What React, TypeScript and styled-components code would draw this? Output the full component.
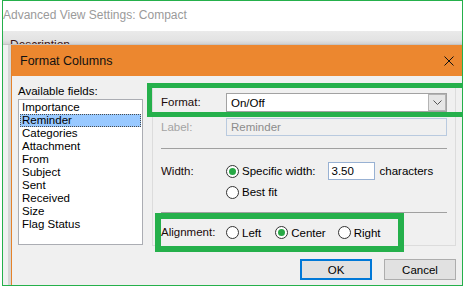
import styled, { createGlobalStyle } from "styled-components";

const GREEN = "#25b04b";

const GlobalStyle = createGlobalStyle`
  html, body {
    margin: 0;
    padding: 0;
    background: #fff;
  }
  body {
    font-family: "Liberation Sans", Arial, sans-serif;
    font-size: 11.5px;
    color: #000;
  }
`;

const Frame = styled.div`
  box-sizing: border-box;
  margin-left: 2px;
  width: 461px;
  height: 286px;
  border: 1px solid ${GREEN};
  overflow: hidden;
  display: flex;
  flex-direction: column;
`;

const WindowTitle = styled.div`
  flex-shrink: 0;
  height: 30px;
  line-height: 28px;
  font-size: 12px;
  color: #9a9a9a;
  white-space: nowrap;
`;

const Band = styled.div`
  flex-shrink: 0;
  box-sizing: border-box;
  height: 14px;
  overflow: hidden;
  padding: 7px 0 0 7px;
  line-height: 14px;
  font-size: 12px;
  color: #3a1414;
  background: linear-gradient(#eaeaea, #e3e3e3 70%, #d2d2d2);
  border-bottom: 1px solid #c4c4c4;
`;

const Lower = styled.div`
  flex: 1;
  display: flex;
  min-height: 0;
`;

const LeftStrip = styled.div`
  flex-shrink: 0;
  box-sizing: border-box;
  width: 8px;
  background: #f0f0f0;
  border-right: 3px solid #d6d6d6;
`;

const Dialog = styled.div`
  flex-shrink: 0;
  width: 465px;
  display: flex;
  flex-direction: column;
  background: #f0f0f0;
  border-left: 1px solid #e5822a;
`;

const Header = styled.div`
  height: 31px;
  display: flex;
  align-items: center;
  justify-content: space-between;
  padding: 0 23px 0 8px;
  background: #ec872f;
  font-size: 12.5px;
  color: #111;
`;

const Body = styled.div`
  padding: 8px 20px 0 6px;
`;

const Columns = styled.div`
  display: grid;
  grid-template-columns: 125px 304px;
  column-gap: 9px;
  align-items: start;
`;

const FieldsLabel = styled.div`
  height: 14px;
  line-height: 14px;
  margin-bottom: 1px;
`;

const ListBox = styled.div`
  box-sizing: border-box;
  height: 146px;
  padding: 1px;
  background: #fff;
  border: 1px solid #abadb3;
`;

const ListItem = styled.div<{ $selected?: boolean }>`
  height: 13px;
  line-height: 13px;
  padding-left: 2px;
  background: ${(p) => (p.$selected ? "#99c9ff" : "transparent")};
  outline: ${(p) => (p.$selected ? "1px dotted #4a4a4a" : "none")};
  outline-offset: -1px;
`;

const Panel = styled.div`
  margin-top: 2px;
  display: flex;
  flex-direction: column;
  border: 1px solid #dcdcdc;
`;

const FormatBox = styled.div`
  box-sizing: border-box;
  height: 34px;
  margin: -4px -13px 0 -6px;
  padding: 5px 0 0 9px;
  display: flex;
  align-items: flex-start;
  border: 5px solid ${GREEN};
`;

const Row = styled.div<{ $top: number; $indent?: number }>`
  display: flex;
  align-items: center;
  height: 18px;
  margin-top: ${(p) => p.$top}px;
  padding-left: ${(p) => p.$indent ?? 8}px;
`;

const FieldName = styled.span<{ $disabled?: boolean; $width?: number }>`
  width: ${(p) => p.$width ?? 65}px;
  flex-shrink: 0;
  line-height: 19px;
  color: ${(p) => (p.$disabled ? "#a3a3a3" : "#1a0a0a")};
`;

const Select = styled.div`
  box-sizing: border-box;
  width: 221px;
  height: 19px;
  display: flex;
  align-items: center;
  padding-left: 4px;
  background: #fff;
  border: 1px solid #a2a2a2;
`;

const SelectButton = styled.span`
  box-sizing: border-box;
  margin-left: auto;
  width: 18px;
  height: 17px;
  display: flex;
  align-items: center;
  justify-content: center;
  background: #e6e6e6;
  border: 1px solid #b4b4b4;
`;

const TextBox = styled.div<{ $width: number; $disabled?: boolean }>`
  box-sizing: border-box;
  width: ${(p) => p.$width}px;
  height: 18px;
  line-height: 16px;
  padding-left: ${(p) => (p.$disabled ? 4 : 3)}px;
  background: ${(p) => (p.$disabled ? "#f0f0f0" : "#fff")};
  color: ${(p) => (p.$disabled ? "#8c8c8c" : "#000")};
  border: 1px solid ${(p) => (p.$disabled ? "#b9cadf" : "#98b1d3")};
`;

const Separator = styled.div<{ $top: number }>`
  height: 1px;
  margin: ${(p) => p.$top}px 8px 0;
  background: #a0a0a0;
`;

const AlignBox = styled.div`
  box-sizing: border-box;
  width: 249px;
  height: 39px;
  margin: 0 0 -7px 2px;
  padding-left: 0;
  display: flex;
  align-items: center;
  background: #f0f0f0;
  border: 6px solid ${GREEN};
`;

const Option = styled.label<{ $gap?: number }>`
  display: flex;
  align-items: center;
  gap: 3px;
  margin-right: ${(p) => p.$gap ?? 0}px;
`;

const Circle = styled.span<{ $checked?: boolean }>`
  box-sizing: border-box;
  width: 13px;
  height: 13px;
  border-radius: 50%;
  border: 1px solid #333;
  background: #fff;
  display: flex;
  align-items: center;
  justify-content: center;

  &::after {
    content: "";
    display: ${(p) => (p.$checked ? "block" : "none")};
    width: 7px;
    height: 7px;
    border-radius: 50%;
    background: #27a845;
  }
`;

const Suffix = styled.span<{ $left: number }>`
  margin-left: ${(p) => p.$left}px;
`;

const Buttons = styled.div`
  display: flex;
  justify-content: flex-end;
  gap: 12px;
  margin-top: 13px;
  padding-right: 1px;
`;

const Button = styled.button<{ $primary?: boolean }>`
  box-sizing: border-box;
  width: 72px;
  height: 21px;
  padding: 0;
  font-family: inherit;
  font-size: 11.5px;
  color: #000;
  background: #e1e1e1;
  border: ${(p) => (p.$primary ? "2px solid #0078d7" : "1px solid #adadad")};
`;

const Radio = ({ label, checked, gap }: { label: string; checked?: boolean; gap?: number }) => (
  <Option $gap={gap}>
    <Circle $checked={checked} />
    <span>{label}</span>
  </Option>
);

const fields = [
  "Importance",
  "Reminder",
  "Categories",
  "Attachment",
  "From",
  "Subject",
  "Sent",
  "Received",
  "Size",
  "Flag Status",
];

export default function App() {
  return (
    <>
      <GlobalStyle />
      <Frame>
        <WindowTitle>Advanced View Settings: Compact</WindowTitle>
        <Band>Description</Band>
        <Lower>
          <LeftStrip />
          <Dialog>
            <Header>
              <span>Format Columns</span>
              <svg width="10" height="10" viewBox="0 0 10 10">
                <path d="M0.5 0.5 L9.5 9.5 M9.5 0.5 L0.5 9.5" stroke="#111" strokeWidth="1" fill="none" />
              </svg>
            </Header>
            <Body>
              <Columns>
                <div>
                  <FieldsLabel>Available fields:</FieldsLabel>
                  <ListBox>
                    {fields.map((f) => (
                      <ListItem key={f} $selected={f === "Reminder"}>
                        {f}
                      </ListItem>
                    ))}
                  </ListBox>
                </div>
                <Panel>
                  <FormatBox>
                    <FieldName>Format:</FieldName>
                    <Select>
                      <span>On/Off</span>
                      <SelectButton>
                        <svg width="9" height="5" viewBox="0 0 9 5">
                          <path d="M0.5 0.5 L4.5 4.5 L8.5 0.5" stroke="#555" strokeWidth="1" fill="none" />
                        </svg>
                      </SelectButton>
                    </Select>
                  </FormatBox>
                  <Row $top={1}>
                    <FieldName $disabled>Label:</FieldName>
                    <TextBox $width={221} $disabled>
                      Reminder
                    </TextBox>
                  </Row>
                  <Separator $top={12} />
                  <Row $top={13}>
                    <FieldName>Width:</FieldName>
                    <Radio label="Specific width:" checked />
                    <Suffix $left={12}>
                      <TextBox $width={47}>3.50</TextBox>
                    </Suffix>
                    <Suffix $left={5}>characters</Suffix>
                  </Row>
                  <Row $top={3} $indent={73}>
                    <Radio label="Best fit" />
                  </Row>
                  <Separator $top={11} />
                  <AlignBox>
                    <FieldName $width={65}>Alignment:</FieldName>
                    <Radio label="Left" gap={14} />
                    <Radio label="Center" checked gap={12} />
                    <Radio label="Right" />
                  </AlignBox>
                </Panel>
              </Columns>
              <Buttons>
                <Button $primary>OK</Button>
                <Button>Cancel</Button>
              </Buttons>
            </Body>
          </Dialog>
        </Lower>
      </Frame>
    </>
  );
}
